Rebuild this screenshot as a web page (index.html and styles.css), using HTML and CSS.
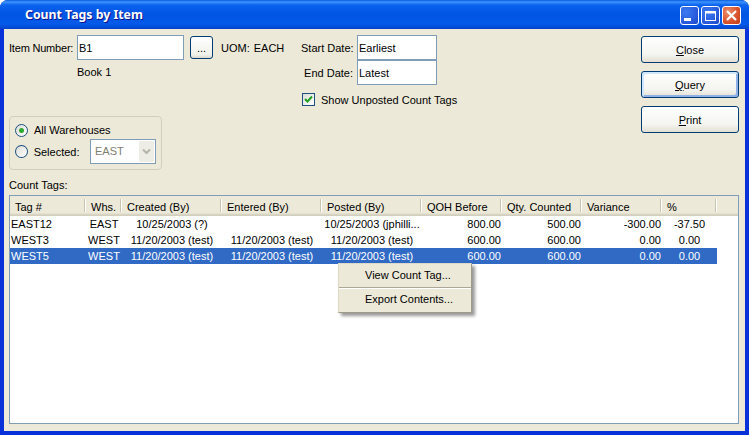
FILE: index.html
```html
<!DOCTYPE html>
<html lang="en">
<head>
    <meta charset="UTF-8">
    <title>Count Tags by Item</title>
    <link rel="stylesheet" href="styles.css">
</head>
<body>
    <div class="window">
        <div class="titlebar">
            <span class="title">Count Tags by Item</span>
            <div class="controls">
                <div class="ctl ctl-blue">
                    <svg width="19" height="19" viewBox="0 0 19 19"><rect x="4" y="12" width="7" height="3" fill="#fff"/></svg>
                </div>
                <div class="ctl ctl-blue">
                    <svg width="19" height="19" viewBox="0 0 19 19"><rect x="4.5" y="5.5" width="10" height="9" fill="none" stroke="#fff"/><rect x="4" y="5" width="11" height="2.5" fill="#fff"/></svg>
                </div>
                <div class="ctl ctl-red">
                    <svg width="19" height="19" viewBox="0 0 19 19"><path d="M5 5l9 9M14 5l-9 9" stroke="#fff" stroke-width="2.2" fill="none"/></svg>
                </div>
            </div>
        </div>

        <div class="client">
            <div class="top">
                <div class="filters">
                    <div class="filter-row">
                        <div class="item-block">
                            <div class="item-line">
                                <label class="item-label">Item Number:</label>
                                <div class="input item-input">B1</div>
                                <div class="dots">...</div>
                                <span class="uom">UOM:</span>
                                <span class="uom-value">EACH</span>
                            </div>
                            <div class="item-desc">Book 1</div>
                        </div>
                        <div class="date-block">
                            <div class="date-line">
                                <label class="date-label">Start Date:</label>
                                <div class="input date-input">Earliest</div>
                            </div>
                            <div class="date-line">
                                <label class="date-label">End Date:</label>
                                <div class="input date-input">Latest</div>
                            </div>
                            <div class="check-line">
                                <span class="checkbox">
                                    <svg width="11" height="11" viewBox="0 0 11 11"><path d="M2 5l2.5 2.5L9 2.5" fill="none" stroke="#21A121" stroke-width="2"/></svg>
                                </span>
                                Show Unposted Count Tags
                            </div>
                        </div>
                    </div>
                    <div class="group">
                        <div class="radio-line">
                            <span class="radio radio-on"></span>
                            All Warehouses
                        </div>
                        <div class="radio-line radio-line-combo">
                            <span class="radio"></span>
                            <span class="selected-label">Selected:</span>
                            <div class="combo">
                                <span class="combo-text">EAST</span>
                                <span class="combo-btn">
                                    <svg width="9" height="7" viewBox="0 0 9 7"><path d="M1 1.5l3.5 3.5L8 1.5" fill="none" stroke="#B4B4A8" stroke-width="2"/></svg>
                                </span>
                            </div>
                        </div>
                    </div>
                </div>
                <div class="actions">
                    <div class="btn"><u>C</u>lose</div>
                    <div class="btn btn-focus"><u>Q</u>uery</div>
                    <div class="btn"><u>P</u>rint</div>
                </div>
            </div>

            <div class="list-label">Count Tags:</div>
            <div class="list">
                <table>
                    <colgroup>
                        <col class="c-tag"><col class="c-whs"><col class="c-date"><col class="c-date"><col class="c-date">
                        <col class="c-num"><col class="c-num"><col class="c-num"><col class="c-pct">
                    </colgroup>
                    <thead>
                        <tr>
                            <th>Tag #</th>
                            <th>Whs.</th>
                            <th>Created (By)</th>
                            <th>Entered (By)</th>
                            <th>Posted (By)</th>
                            <th>QOH Before</th>
                            <th>Qty. Counted</th>
                            <th>Variance</th>
                            <th>%</th>
                        </tr>
                    </thead>
                    <tbody>
                        <tr>
                            <td>EAST12</td>
                            <td class="mid">EAST</td>
                            <td class="mid">10/25/2003 (?)</td>
                            <td class="mid"></td>
                            <td class="mid">10/25/2003 (jphilli...</td>
                            <td class="num">800.00</td>
                            <td class="num">500.00</td>
                            <td class="num">-300.00</td>
                            <td class="mid">-37.50</td>
                        </tr>
                        <tr>
                            <td>WEST3</td>
                            <td class="mid">WEST</td>
                            <td class="mid">11/20/2003 (test)</td>
                            <td class="mid">11/20/2003 (test)</td>
                            <td class="mid">11/20/2003 (test)</td>
                            <td class="num">600.00</td>
                            <td class="num">600.00</td>
                            <td class="num">0.00</td>
                            <td class="mid">0.00</td>
                        </tr>
                        <tr class="selected">
                            <td>WEST5</td>
                            <td class="mid">WEST</td>
                            <td class="mid">11/20/2003 (test)</td>
                            <td class="mid">11/20/2003 (test)</td>
                            <td class="mid">11/20/2003 (test)</td>
                            <td class="num">600.00</td>
                            <td class="num">600.00</td>
                            <td class="num">0.00</td>
                            <td class="mid">0.00</td>
                        </tr>
                    </tbody>
                </table>
                <div class="menu">
                    <div class="menu-item">View Count Tag...</div>
                    <div class="menu-sep"></div>
                    <div class="menu-item">Export Contents...</div>
                </div>
            </div>
        </div>
    </div>
</body>
</html>
```

FILE: styles.css
```css
html, body {
    margin: 0;
    padding: 0;
    background: #fff;
}

body {
    font-family: "Liberation Sans", Arial, sans-serif;
    font-size: 11px;
    color: #000;
    overflow: hidden;
}

.window {
    width: 749px;
    height: 435px;
    box-sizing: border-box;
    display: flex;
    flex-direction: column;
    border-radius: 8px 8px 0 0;
    background: #0831D9;
}

.titlebar {
    height: 29px;
    flex: none;
    display: flex;
    align-items: center;
    padding: 0 8px 0 25px;
    border-radius: 8px 8px 0 0;
    background: linear-gradient(to bottom, #0A5BE0 0, #3D95FF 2px, #0A63EE 5px, #0255E3 14px, #0359E8 24px, #0349D4 28px, #0A3FC0 29px);
}

.title {
    font-family: "Noto Sans", sans-serif;
    font-size: 12.3px;
    font-weight: bold;
    color: #fff;
    text-shadow: 1px 1px 0 #0F1089;
}

.controls {
    margin-left: auto;
    display: flex;
    gap: 2px;
    margin-top: 2px;
}

.ctl {
    width: 19px;
    height: 19px;
    border: 1px solid #fff;
    box-sizing: border-box;
    border-radius: 3px;
    overflow: hidden;
}

.ctl svg {
    display: block;
    margin: -1px;
}

.ctl-blue {
    background: radial-gradient(circle at 30% 30%, #3C7BF0 0, #2B5FE0 55%, #1D47C8 100%);
}

.ctl-red {
    background: radial-gradient(circle at 30% 30%, #E88E6C 0, #DA5630 55%, #C23A14 100%);
}

.client {
    flex: 1;
    margin: 0 4px 4px;
    padding: 6px 6px 7px 5px;
    background: #ECE9D8;
    display: flex;
    flex-direction: column;
    min-height: 0;
}

.top {
    display: flex;
    justify-content: space-between;
}

.filter-row {
    display: flex;
}

.item-block {
    width: 292px;
}

.item-line {
    display: flex;
    align-items: center;
    height: 25px;
    white-space: nowrap;
}

.item-label {
    width: 68px;
    letter-spacing: -0.2px;
}

.input {
    box-sizing: border-box;
    height: 25px;
    line-height: 24px;
    padding-left: 1px;
    border: 1px solid #7F9DB9;
    background: #fff;
}

.item-input {
    width: 107px;
}

.dots {
    box-sizing: border-box;
    width: 23px;
    height: 23px;
    margin-left: 6px;
    text-align: center;
    line-height: 22px;
    border: 1px solid #003C74;
    border-radius: 3px;
    background: linear-gradient(to bottom, #fff, #F0F0EA 85%, #DCD8CA);
}

.uom {
    margin-left: 8px;
}

.uom-value {
    margin-left: 4px;
}

.item-desc {
    margin: 6px 0 0 68px;
}

.date-line {
    display: flex;
    align-items: center;
    height: 25px;
    white-space: nowrap;
}

.date-label {
    width: 52px;
    text-align: right;
    margin-right: 4px;
}

.date-input {
    width: 80px;
}

.check-line {
    display: flex;
    align-items: center;
    gap: 6px;
    height: 13px;
    margin: 8px 0 0 1px;
    white-space: nowrap;
}

.checkbox {
    box-sizing: border-box;
    width: 13px;
    height: 13px;
    border: 1px solid #1C5180;
    background: linear-gradient(135deg, #DCDCD7, #fff);
    display: block;
}

.checkbox svg {
    display: block;
}

.group {
    box-sizing: border-box;
    width: 153px;
    height: 54px;
    margin-top: 10px;
    padding: 5px 5px;
    border: 1px solid #D0D0BF;
    border-radius: 4px;
}

.radio-line {
    display: flex;
    align-items: center;
    gap: 6px;
    height: 16px;
}

.radio-line-combo {
    height: 25px;
    margin-top: 1px;
}

.radio {
    box-sizing: border-box;
    width: 13px;
    height: 13px;
    border: 1px solid #1C5180;
    border-radius: 50%;
    background: linear-gradient(135deg, #DCDCD7, #fff);
    display: flex;
    align-items: center;
    justify-content: center;
}

.radio-on::after {
    content: "";
    width: 5px;
    height: 5px;
    border-radius: 50%;
    background: #2FA82F;
}

.selected-label {
    width: 55px;
}

.combo {
    box-sizing: border-box;
    width: 68px;
    height: 25px;
    margin-left: -3px;
    border: 1px solid #7F9DB9;
    background: #fff;
    display: flex;
    color: #7E7E70;
    padding: 1px;
}

.combo-text {
    flex: 1;
    line-height: 20px;
    padding-left: 3px;
}

.combo-btn {
    width: 15px;
    background: #EEEDE5;
    border-radius: 2px;
    display: flex;
    align-items: center;
    justify-content: center;
}

.actions {
    display: flex;
    flex-direction: column;
    gap: 8px;
    margin-top: 1px;
}

.btn {
    box-sizing: border-box;
    width: 98px;
    height: 27px;
    line-height: 26px;
    text-align: center;
    border: 1px solid #003C74;
    border-radius: 3px;
    background: linear-gradient(to bottom, #fff, #F4F4F0 70%, #E3E0D2);
}

.btn-focus {
    box-shadow: inset 2px 2px 0 #CEE7FF, inset -2px -2px 0 #8FB1E8;
}

.list-label {
    margin-top: 8px;
    height: 17px;
    line-height: 14px;
}

.list {
    flex: 1;
    position: relative;
    border: 1px solid #7F9DB9;
    background: linear-gradient(to bottom, #ECE9D8 17px, #DDD9C8 18px, #CFCBBA 20px) no-repeat 0 0 / 100% 20px, #fff;
    min-height: 0;
    overflow: hidden;
}

table {
    border-collapse: collapse;
    table-layout: fixed;
    width: 707px;
    font-size: 11px;
}

.c-tag { width: 76px; }
.c-whs { width: 36px; }
.c-date { width: 100px; }
.c-num { width: 80px; }
.c-pct { width: 55px; }

th {
    height: 20px;
    box-sizing: border-box;
    padding: 2px 5px 0;
    font-weight: normal;
    text-align: left;
    white-space: nowrap;
    position: relative;
}

th::after {
    content: "";
    position: absolute;
    right: 0;
    top: 3px;
    height: 13px;
    width: 1px;
    background: #C7C5B2;
    border-right: 1px solid #fff;
}

td {
    height: 16px;
    padding: 0 1px;
    white-space: nowrap;
    line-height: 16px;
}

.mid { text-align: center; }
.num { text-align: right; }

.selected td {
    background: #316AC5;
    color: #fff;
}

.menu {
    position: absolute;
    left: 328px;
    top: 67px;
    width: 134px;
    box-sizing: border-box;
    padding: 2px;
    background: #ECE9D8;
    border: 1px solid;
    border-color: #DCD9C8 #9D9A8A #9D9A8A #DCD9C8;
    box-shadow: 3px 3px 3px rgba(0, 0, 0, 0.4);
}

.menu-item {
    height: 20px;
    line-height: 19px;
    padding-left: 24px;
}

.menu-sep {
    height: 2px;
    margin: 1px -2px;
    background: #ACA899;
    border-bottom: 1px solid #fff;
    box-sizing: border-box;
}
```
